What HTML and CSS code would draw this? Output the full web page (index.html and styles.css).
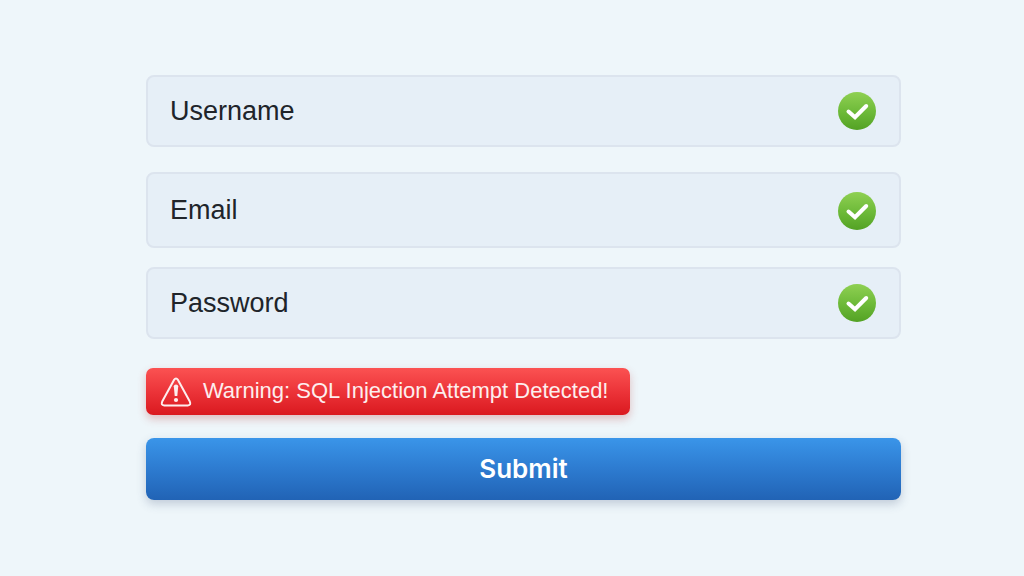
FILE: index.html
```html
<!DOCTYPE html>
<html lang="en">
<head>
  <meta charset="UTF-8">
  <meta name="viewport" content="width=device-width, initial-scale=1.0">
  <title>Sign up</title>
  <link rel="stylesheet" href="styles.css">
</head>
<body>
  <!-- Check mark gradient, shared by the three fields -->
  <svg class="defs" width="0" height="0" aria-hidden="true">
    <defs>
      <linearGradient id="green" x1="0" y1="0" x2="0" y2="1">
        <stop offset="0" stop-color="#8fd052"/>
        <stop offset="0.5" stop-color="#6fbb3a"/>
        <stop offset="1" stop-color="#53a224"/>
      </linearGradient>
    </defs>
  </svg>

  <form class="form">
    <div class="field">
      <label for="username">Username</label>
      <input id="username" type="text" autocomplete="username">
      <svg class="check" viewBox="0 0 38 38" aria-hidden="true">
        <circle cx="19" cy="19" r="19" fill="url(#green)"/>
        <path d="M10.5 19.5L17 25.2L28.2 14"/>
      </svg>
    </div>

    <div class="field field-tall">
      <label for="email">Email</label>
      <input id="email" type="email" autocomplete="email">
      <svg class="check" viewBox="0 0 38 38" aria-hidden="true">
        <circle cx="19" cy="19" r="19" fill="url(#green)"/>
        <path d="M10.5 19.5L17 25.2L28.2 14"/>
      </svg>
    </div>

    <div class="field">
      <label for="password">Password</label>
      <input id="password" type="password" autocomplete="new-password">
      <svg class="check" viewBox="0 0 38 38" aria-hidden="true">
        <circle cx="19" cy="19" r="19" fill="url(#green)"/>
        <path d="M10.5 19.5L17 25.2L28.2 14"/>
      </svg>
    </div>

    <div class="warning" role="alert">
      <svg class="warning-icon" viewBox="0 0 32 30" aria-hidden="true">
        <path class="triangle" d="M14 2.9Q16 0.2 18 2.9L29.8 24.6Q31.4 28.2 27.8 28.4H4.2Q0.6 28.2 2.2 24.6Z"/>
        <path class="mark" d="M13.8 9.2Q13.8 7.4 16 7.4T18.2 9.2L17.3 19H14.7Z"/>
        <circle class="mark" cx="16" cy="23" r="2.1"/>
      </svg>
      <span>Warning: SQL Injection Attempt Detected!</span>
    </div>

    <button class="submit" type="submit">Submit</button>
  </form>
</body>
</html>
```
FILE: styles.css
```css
* {
  box-sizing: border-box;
}

body {
  margin: 0;
  background-color: #eef6fa;
  color: #20242a;
  font-family: "Liberation Sans", Arial, sans-serif;
}

.defs {
  position: absolute;
}

.form {
  display: flex;
  flex-direction: column;
  padding: 75px 12% 75px 14.25%;
}

/* Fields */
.field {
  display: flex;
  align-items: center;
  gap: 16px;
  margin-bottom: 25px;
  padding: 15px 23px 15px 22px;
  border: 2px solid #dce4ee;
  border-radius: 8px;
  background-color: #e6eff7;
}

.field-tall {
  align-items: flex-start;
  margin-bottom: 19px;
  padding-top: 18px;
  padding-bottom: 16px;
}

.field label {
  font-size: 27px;
  line-height: 36px;
}

.field input {
  flex: 1;
  min-width: 0;
  padding: 0;
  border: none;
  outline: none;
  background: none;
  color: inherit;
  font: inherit;
  font-size: 27px;
  line-height: 36px;
}

.field:focus-within {
  border-color: #3a95e9;
}

.check {
  flex: none;
  width: 38px;
  height: 38px;
}

.check path {
  fill: none;
  stroke: #fff;
  stroke-width: 4;
  stroke-linecap: round;
}

/* Warning banner */
.warning {
  display: flex;
  align-items: center;
  align-self: flex-start;
  gap: 11px;
  margin: 4px 0 23px;
  padding: 8px 22px 8px 14px;
  border-radius: 7px;
  background: linear-gradient(#fb5252, #ec3439 50%, #da191f);
  box-shadow: 0 4px 8px rgba(190, 60, 60, 0.3);
  color: #fdeeee;
  font-size: 22px;
  line-height: 30px;
}

.warning span {
  margin-bottom: 1px;
}

.warning-icon {
  flex: none;
  width: 32px;
  height: 30px;
}

.triangle {
  fill: none;
  stroke: #fdeeee;
  stroke-width: 2;
  stroke-linejoin: round;
}

.mark {
  fill: #fdeeee;
}

/* Submit */
.submit {
  padding: 14px;
  border: none;
  border-radius: 8px;
  background: linear-gradient(#3a95e9, #2d7bd0 50%, #2163b5);
  box-shadow: 0 4px 10px rgba(60, 80, 120, 0.25);
  color: #fff;
  font-family: Inter, "Liberation Sans", sans-serif;
  font-size: 26px;
  font-weight: 600;
  line-height: 34px;
  cursor: pointer;
}

.submit:hover {
  background: linear-gradient(#459ff0, #2163b5);
}
```
